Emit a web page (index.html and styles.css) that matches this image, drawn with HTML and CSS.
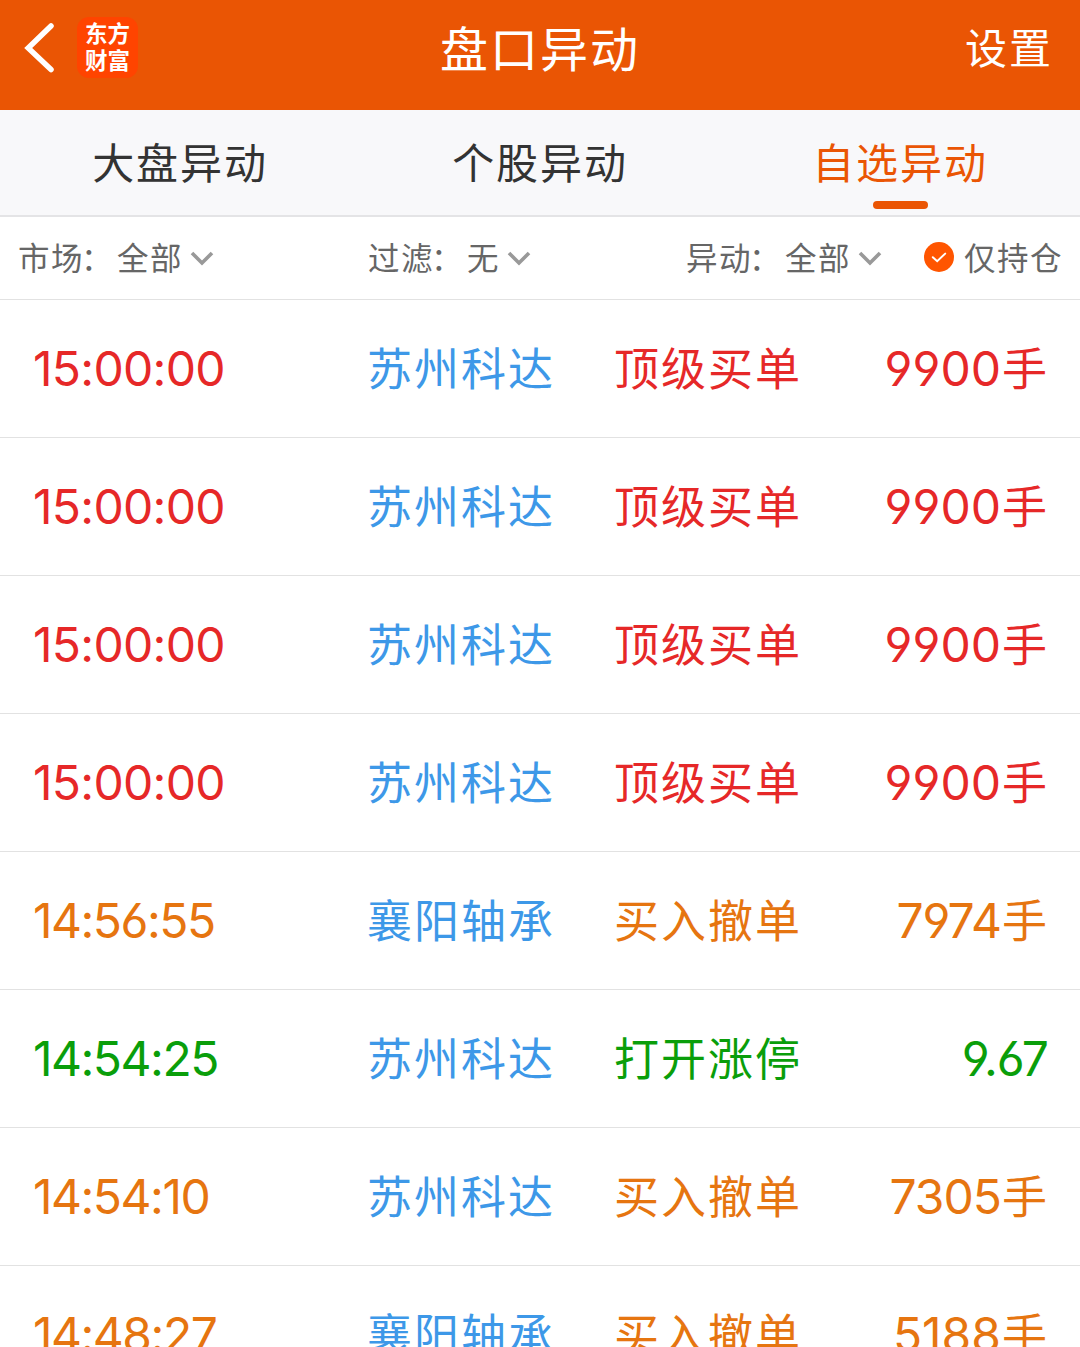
FILE: index.html
```
<!DOCTYPE html>
<html lang="zh-CN">
<head>
    <meta charset="UTF-8">
    <meta name="viewport" content="width=device-width, initial-scale=1.0">
    <title>盘口异动</title>
    <link rel="stylesheet" href="styles.css">
</head>
<body>
    <header class="header">
        <div class="header-left">
            <svg class="back" width="32" height="52" viewBox="0 0 32 52" fill="none" stroke="#fff" stroke-width="5.5" stroke-linecap="round">
                <path d="M27 4 L4.2 26 L27 47.5"/>
            </svg>
            <div class="logo">东方<br>财富</div>
        </div>
        <h1 class="title">盘口异动</h1>
        <a class="settings">设置</a>
    </header>

    <nav class="tabs">
        <a class="tab">大盘异动</a>
        <a class="tab">个股异动</a>
        <a class="tab active">自选异动</a>
    </nav>

    <div class="filters">
        <div class="filter"><span>市场<i class="colon">：</i>全部</span><svg class="arrow" width="24" height="16" viewBox="0 0 24 16"><path d="M2 3 L12 13 L22 3"/></svg></div>
        <div class="filter"><span>过滤<i class="colon">：</i>无</span><svg class="arrow" width="24" height="16" viewBox="0 0 24 16"><path d="M2 3 L12 13 L22 3"/></svg></div>
        <div class="filter"><span>异动<i class="colon">：</i>全部</span><svg class="arrow" width="24" height="16" viewBox="0 0 24 16"><path d="M2 3 L12 13 L22 3"/></svg></div>
        <div class="filter">
            <svg class="check" width="30" height="30" viewBox="0 0 30 30">
                <circle cx="15" cy="15" r="15" fill="#ff5500"/>
                <path d="M8.8 15.2 L13.2 19.2 L21.2 11.6" fill="none" stroke="#fff" stroke-width="2" stroke-linecap="round"/>
            </svg>
            <span>仅持仓</span>
        </div>
    </div>

    <main class="list">
        <div class="row red">
            <span class="time">15:00:00</span><span class="name">苏州科达</span><span class="type">顶级买单</span><span class="value">9900<i>手</i></span>
        </div>
        <div class="row red">
            <span class="time">15:00:00</span><span class="name">苏州科达</span><span class="type">顶级买单</span><span class="value">9900<i>手</i></span>
        </div>
        <div class="row red">
            <span class="time">15:00:00</span><span class="name">苏州科达</span><span class="type">顶级买单</span><span class="value">9900<i>手</i></span>
        </div>
        <div class="row red">
            <span class="time">15:00:00</span><span class="name">苏州科达</span><span class="type">顶级买单</span><span class="value">9900<i>手</i></span>
        </div>
        <div class="row orange">
            <span class="time">14:56:55</span><span class="name">襄阳轴承</span><span class="type">买入撤单</span><span class="value tight">7974<i>手</i></span>
        </div>
        <div class="row green">
            <span class="time">14:54:25</span><span class="name">苏州科达</span><span class="type">打开涨停</span><span class="value price">9.67</span>
        </div>
        <div class="row orange">
            <span class="time">14:54:10</span><span class="name">苏州科达</span><span class="type">买入撤单</span><span class="value tight">7305<i>手</i></span>
        </div>
        <div class="row orange">
            <span class="time">14:48:27</span><span class="name">襄阳轴承</span><span class="type">买入撤单</span><span class="value">5188<i>手</i></span>
        </div>
    </main>
</body>
</html>
```

FILE: styles.css
```
* {
    margin: 0;
    padding: 0;
    box-sizing: border-box;
}

body {
    height: 1347px;
    overflow: hidden;
    background-color: #fff;
    font-family: "Noto Sans CJK SC", sans-serif;
}

.header {
    display: grid;
    grid-template-columns: 1fr auto 1fr;
    align-items: center;
    height: 110px;
    padding: 0 27px 15px 24px;
    background-color: #ea5504;
    color: #fff;
}

.header-left {
    display: flex;
    align-items: center;
    gap: 21px;
}

.logo {
    width: 61px;
    height: 61px;
    padding-top: 2px;
    border-radius: 12px;
    background-color: #ff4400;
    font-size: 22.5px;
    font-weight: 700;
    line-height: 27px;
    text-align: center;
}

.title {
    padding: 0 0 4px 3px;
    font-size: 48px;
    font-weight: 400;
    line-height: 60px;
    letter-spacing: 2px;
}

.settings {
    justify-self: end;
    padding-bottom: 4px;
    font-size: 42px;
    line-height: 60px;
    letter-spacing: 2px;
}

.tabs {
    display: grid;
    grid-template-columns: repeat(3, 1fr);
    height: 107px;
    border-bottom: 2px solid #e4e4e6;
    background-color: #f8f8fa;
}

.tab {
    display: flex;
    flex-direction: column;
    align-items: center;
    padding-top: 21px;
    font-size: 42px;
    line-height: 60px;
    letter-spacing: 1.9px;
    color: #333;
}

.tab.active {
    color: #ea5504;
}

.tab.active::after {
    content: "";
    width: 55px;
    height: 8px;
    margin-top: 10px;
    border-radius: 4px;
    background-color: #ea5504;
}

.filters {
    display: grid;
    grid-template-columns: 350px 318px 238px 1fr;
    align-items: center;
    height: 83px;
    padding-left: 18px;
    border-bottom: 1px solid #e2e2e2;
    color: #666;
}

.filter {
    display: flex;
    align-items: center;
    font-size: 31.5px;
    line-height: 42px;
    letter-spacing: 1.5px;
    white-space: nowrap;
}

.filter span {
    padding-bottom: 4px;
}

.colon {
    margin: 0 3px 0 -3px;
    font-style: normal;
}

.arrow {
    margin-left: 7px;
    fill: none;
    stroke: #999;
    stroke-width: 3.6;
}

.check {
    margin: 0 10px 2px 0;
}

.row {
    display: grid;
    grid-template-columns: 334px 247px 1fr auto;
    align-items: center;
    height: 138px;
    padding: 0 33px 0 34px;
    border-bottom: 1px solid #e2e2e2;
    font-size: 45px;
    line-height: 64px;
}

.time,
.value {
    font-family: Inter, "Noto Sans CJK SC", sans-serif;
    font-size: 48px;
    /* open six and nine */
    font-feature-settings: "cv03", "cv04";
}

.time {
    margin-left: -1px;
    letter-spacing: -1.5px;
}

.red .time {
    letter-spacing: -0.7px;
}

.value {
    padding-bottom: 2px;
    letter-spacing: 0;
}

.value.tight {
    letter-spacing: -1px;
}

.value.price {
    margin-right: -1px;
    padding-bottom: 0;
    letter-spacing: -1px;
}

.value i {
    margin-left: 1px;
    font-family: "Noto Sans CJK SC", sans-serif;
    font-size: 45px;
    font-style: normal;
    letter-spacing: 0;
}

.name,
.type {
    padding-bottom: 4px;
    margin-left: -1px;
    letter-spacing: 2px;
}

.name {
    color: #3d98e8;
}

.red {
    color: #e62828;
}

.orange {
    color: #e67510;
}

.green {
    color: #0a9e0a;
}
```
